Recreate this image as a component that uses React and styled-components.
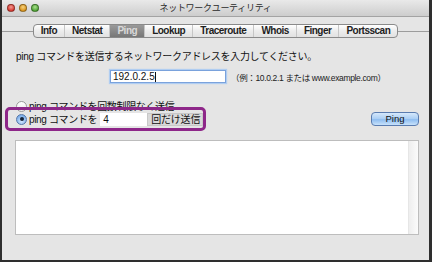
import React from 'react';
import styled, { createGlobalStyle } from 'styled-components';

const FONT = `"Liberation Sans", "Noto Sans CJK JP", sans-serif`;

const TABS = ['Info', 'Netstat', 'Ping', 'Lookup', 'Traceroute', 'Whois', 'Finger', 'Portsscan'];
const LIGHTS = [
  ['#f39a92', '#d8372e'],
  ['#f7d27e', '#d9941c'],
  ['#a9e08d', '#4ea334'],
];

const App = () => {
  return (
    <>
      <GlobalStyle />
      <Window>
        <TitleBar>
          <Lights>
            {LIGHTS.map(([hi, lo]) => (
              <Light key={lo} $hi={hi} $lo={lo} />
            ))}
          </Lights>
          <Title>ネットワークユーティリティ</Title>
          <span />
        </TitleBar>

        <TabStrip>
          <Rule />
          <Tabs>
            {TABS.map((t) => (
              <Tab key={t} $active={t === 'Ping'}>{t}</Tab>
            ))}
          </Tabs>
          <Rule />
        </TabStrip>

        <Body>
          <Prompt>ping コマンドを送信するネットワークアドレスを入力してください。</Prompt>

          <AddressRow>
            <TextField>
              192.0.2.5<Caret />
            </TextField>
            <Hint>（例：10.0.2.1 または www.example.com）</Hint>
          </AddressRow>

          <RadioRow>
            <Radio />
            <Label>ping コマンドを回数制限なく送信</Label>
          </RadioRow>

          <ActionRow>
            <Option>
              <Radio $checked />
              <Label>ping コマンドを</Label>
              <NumberField>4</NumberField>
              <Suffix>回だけ送信</Suffix>
            </Option>
            <PingButton>Ping</PingButton>
          </ActionRow>

          <Output>
            <ScrollTrack />
          </Output>
        </Body>
      </Window>
    </>
  );
};

const GlobalStyle = createGlobalStyle`
  html, body {
    margin: 0;
    padding: 0;
    background: #2b2b2b;
  }
  body {
    font-family: ${FONT};
  }
`;

const Window = styled.div`
  width: 432px;
  height: 262px;
  box-sizing: border-box;
  border: 2px solid #2e2e2e;
  border-top: 0;
  border-right-width: 3px;
  background: #e5e5e5;
  display: flex;
  flex-direction: column;
`;

const TitleBar = styled.div`
  height: 17px;
  box-sizing: border-box;
  display: grid;
  grid-template-columns: 1fr auto 1fr;
  align-items: center;
  background: linear-gradient(#e9e9e9, #cdcdcd);
  border-bottom: 1px solid #a3a3a3;
`;

const Lights = styled.div`
  display: flex;
  gap: 4px;
  padding-left: 5px;
`;

const Light = styled.span`
  width: 8px;
  height: 8px;
  border-radius: 50%;
  box-sizing: border-box;
  border: 1px solid rgba(0, 0, 0, 0.35);
  background: radial-gradient(circle at 50% 35%, ${(p) => p.$hi}, ${(p) => p.$lo} 75%);
`;

const Title = styled.div`
  font-size: 9px;
  letter-spacing: -0.3px;
  color: #2a2a2a;
  line-height: 16px;
`;

const TabStrip = styled.div`
  margin-top: 7px;
  display: flex;
  align-items: center;
`;

const Rule = styled.div`
  flex: 1;
  height: 1px;
  background: #9c9c9c;
`;

const Tabs = styled.div`
  display: flex;
  height: 14px;
  box-sizing: border-box;
  border: 1px solid #8a8a8a;
  border-radius: 4px;
  overflow: hidden;
  background: linear-gradient(#ffffff, #ececec 50%, #e2e2e2);
`;

const Tab = styled.div`
  padding: 0 7px;
  font-size: 10px;
  font-weight: bold;
  letter-spacing: -0.5px;
  line-height: 12px;
  color: ${(p) => (p.$active ? '#d9d9d9' : '#1e1e1e')};
  background: ${(p) => (p.$active ? 'linear-gradient(#9a9a9a, #777777)' : 'transparent')};
  border-left: 1px solid #c6c6c6;

  &:first-child {
    border-left: 0;
  }
`;

const Body = styled.div`
  display: flex;
  flex-direction: column;
  padding: 12px 10px 0 14px;
  color: #111;
`;

const Prompt = styled.div`
  font-size: 10px;
  line-height: 14px;
  letter-spacing: -0.3px;
`;

const AddressRow = styled.div`
  display: flex;
  align-items: center;
  margin-top: 6px;
  padding-left: 94px;
`;

const TextField = styled.div`
  width: 116px;
  height: 13px;
  box-sizing: border-box;
  padding: 0 2px;
  display: flex;
  align-items: center;
  background: #fff;
  border: 1px solid #7aa2dc;
  box-shadow: 0 0 1px 1px #b0cdf1;
  font-size: 10px;
  line-height: 11px;
`;

const Caret = styled.span`
  width: 1px;
  height: 10px;
  background: #111;
`;

const Hint = styled.span`
  margin-left: 5px;
  font-size: 8.5px;
  letter-spacing: -0.35px;
  color: #222;
`;

const RadioRow = styled.div`
  display: flex;
  align-items: center;
  gap: 2px;
  height: 13px;
  margin-top: 17px;
`;

const Radio = styled.span`
  width: 11px;
  height: 11px;
  box-sizing: border-box;
  border-radius: 50%;
  display: flex;
  align-items: center;
  justify-content: center;
  border: 1px solid ${(p) => (p.$checked ? '#5677a8' : '#9a9a9a')};
  background: ${(p) =>
    p.$checked
      ? 'radial-gradient(circle at 50% 70%, #d3e8fd, #8ab8ee 60%, #6b9fe0)'
      : 'linear-gradient(#ffffff, #eaeaea)'};

  &::before {
    content: '';
    display: ${(p) => (p.$checked ? 'block' : 'none')};
    width: 4px;
    height: 4px;
    border-radius: 50%;
    background: #16243a;
  }
`;

const Label = styled.span`
  font-size: 10px;
  letter-spacing: -0.35px;
  line-height: 13px;
  white-space: nowrap;
`;

const ActionRow = styled.div`
  display: flex;
  align-items: center;
  justify-content: space-between;
  height: 16px;
  margin-top: -2px;
`;

const Option = styled.div`
  position: relative;
  display: flex;
  align-items: center;
  gap: 2px;

  &::after {
    content: '';
    position: absolute;
    top: -6px;
    bottom: -5px;
    left: -11px;
    right: -3px;
    border: 3px solid #8e2789;
    border-radius: 5px;
    pointer-events: none;
  }
`;

const NumberField = styled.div`
  width: 47px;
  height: 13px;
  box-sizing: border-box;
  margin-left: 1px;
  padding-left: 3px;
  background: #fff;
  font-size: 10px;
  line-height: 13px;
`;

const Suffix = styled.div`
  width: 56px;
  height: 13px;
  margin-left: -2px;
  box-sizing: border-box;
  padding-left: 3px;
  background: #d9d9d9;
  border: 1px solid #c8c8c8;
  font-size: 10px;
  letter-spacing: -0.2px;
  line-height: 11px;
`;

const PingButton = styled.div`
  width: 48px;
  height: 14px;
  box-sizing: border-box;
  border: 1px solid #5a7cb0;
  border-radius: 4px;
  background: linear-gradient(#d6e8fb, #a9cdf4 50%, #8fbdf0 55%, #c8e2fb);
  font-size: 9.5px;
  line-height: 12px;
  text-align: center;
  color: #111;
`;

const Output = styled.div`
  margin-top: 13px;
  margin-left: -1px;
  height: 95px;
  box-sizing: border-box;
  background: #fff;
  border: 1px solid #bdbdbd;
  display: flex;
  justify-content: flex-end;
`;

const ScrollTrack = styled.div`
  width: 9px;
  background: linear-gradient(to right, #eeeeee, #fbfbfb);
  border-left: 1px solid #e6e6e6;
`;

export default App;
